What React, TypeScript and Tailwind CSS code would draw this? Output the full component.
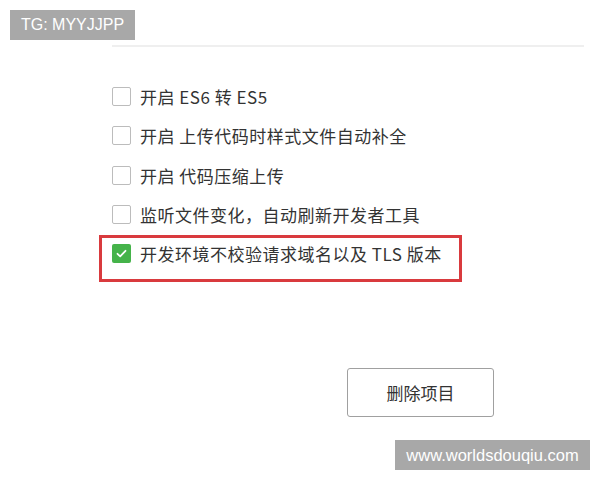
import React from "react";

const rows = [
  { label: "开启 ES6 转 ES5", checked: false },
  { label: "开启 上传代码时样式文件自动补全", checked: false },
  { label: "开启 代码压缩上传", checked: false },
  { label: "监听文件变化，自动刷新开发者工具", checked: false },
  { label: "开发环境不校验请求域名以及 TLS 版本", checked: true },
];

function Box({ checked }: { checked: boolean }) {
  if (checked) {
    return (
      <span className="flex h-[19px] w-[19px] shrink-0 items-center justify-center rounded-[2px] bg-[#45b34a]">
        <svg width="13" height="13" viewBox="0 0 13 13" fill="none">
          <path d="M2.5 6.8 L5.2 9.3 L10.5 3.8" stroke="#fff" strokeWidth="1.8" strokeLinecap="round" strokeLinejoin="round" />
        </svg>
      </span>
    );
  }
  return <span className="h-[19px] w-[19px] shrink-0 rounded-[2px] border border-[#bcbcbc] bg-white" />;
}

export default function App() {
  return (
    <div
      className="relative h-[480px] w-[600px] overflow-hidden bg-white text-[#333]"
      style={{ fontFamily: '"Noto Sans CJK SC", "Liberation Sans", sans-serif' }}
    >
      <div className="flex flex-col pl-[112px] pr-[16px] pt-[45px]">
        <div className="h-[2px] w-full bg-[#efefef]" />
        <div className="mt-[30px] flex flex-col">
          {rows.map((r) => (
            <div key={r.label} className="relative flex h-[39.3px] items-center gap-[9px] text-[17px] leading-none tracking-[0.5px]">
              {r.checked && (
                <span className="pointer-events-none absolute left-[-13px] top-[1px] h-[47px] w-[363px] border-[3px] border-[#d93a3e]" />
              )}
              <Box checked={r.checked} />
              <span className="whitespace-nowrap">{r.label}</span>
            </div>
          ))}
        </div>
        <button className="ml-[235px] mt-[95px] flex h-[49px] w-[147px] items-center justify-center rounded-[3px] border border-[#a0a0a0] bg-white text-[17px] text-[#333]">
          删除项目
        </button>
      </div>

      <div
        className="absolute left-[10px] top-[10px] flex h-[30px] w-[125px] items-center justify-center bg-[#a8a8a8] text-[16px] text-white"
        style={{ fontFamily: '"Liberation Sans", Arial, sans-serif' }}
      >
        TG: MYYJJPP
      </div>
      <div
        className="absolute left-[395px] top-[440px] flex h-[30px] w-[195px] items-center justify-center bg-[#a8a8a8] text-[16.5px] text-white"
        style={{ fontFamily: '"Liberation Sans", Arial, sans-serif' }}
      >
        www.worldsdouqiu.com
      </div>
    </div>
  );
}
